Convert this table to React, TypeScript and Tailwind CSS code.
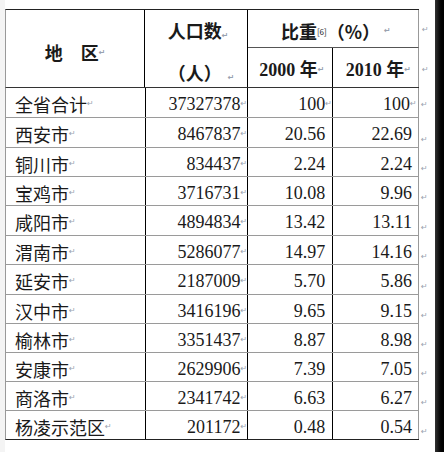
const CJK = "font-['Noto_Sans_CJK_SC',sans-serif]"

type Row = { name: string; pop: string; y2000: string; y2010: string; h: string; marks?: boolean }

const ROWS: Row[] = [
  { name: '全省合计', pop: '37327378', y2000: '100', y2010: '100', h: 'h-[30px]', marks: true },
  { name: '西安市', pop: '8467837', y2000: '20.56', y2010: '22.69', h: 'h-[30px]' },
  { name: '铜川市', pop: '834437', y2000: '2.24', y2010: '2.24', h: 'h-[29px]' },
  { name: '宝鸡市', pop: '3716731', y2000: '10.08', y2010: '9.96', h: 'h-[29px]' },
  { name: '咸阳市', pop: '4894834', y2000: '13.42', y2010: '13.11', h: 'h-[30px]' },
  { name: '渭南市', pop: '5286077', y2000: '14.97', y2010: '14.16', h: 'h-[29px]' },
  { name: '延安市', pop: '2187009', y2000: '5.70', y2010: '5.86', h: 'h-[30px]' },
  { name: '汉中市', pop: '3416196', y2000: '9.65', y2010: '9.15', h: 'h-[29px]' },
  { name: '榆林市', pop: '3351437', y2000: '8.87', y2010: '8.98', h: 'h-[29px]' },
  { name: '安康市', pop: '2629906', y2000: '7.39', y2010: '7.05', h: 'h-[29px]' },
  { name: '商洛市', pop: '2341742', y2000: '6.63', y2010: '6.27', h: 'h-[29px]' },
  { name: '杨凌示范区', pop: '201172', y2000: '0.48', y2010: '0.54', h: 'h-[29px]' },
]

/** Word paragraph mark. */
function Mark({ className }: { className?: string }) {
  return (
    <span
      className={`inline-block w-[7px] font-['DejaVu_Sans',sans-serif] text-[8px] leading-none text-gray-400 ${className ?? ''}`}
    >
      ↵
    </span>
  )
}

function Header() {
  return (
    <div className="flex">
      <div className={`flex h-[79px] w-[414px] border-b border-l border-t border-b-[#333] border-l-[#999] border-t-[#222] font-bold ${CJK}`}>
        <div className="flex w-[140px] items-center justify-center border-r border-black pt-[8px]">
          地　区<Mark />
        </div>
        <div className="flex w-[103px] flex-col items-center justify-between border-r border-black pb-[5px] pt-[11px] leading-none">
          <span className="pl-[4px]">
            人口数<Mark />
          </span>
          <span className="pl-[10px]">
            （人）<Mark className="ml-[6px]" />
          </span>
        </div>
        <div className="flex w-[171px] flex-col">
          <div className="flex h-[38px] items-center justify-center border-b border-r border-b-[#555] border-r-[#999] pt-[4px] leading-none">
            <span className="pl-[6px]">
              比重<sup className="text-[8px] font-normal">[6]</sup>（%）
            </span>
            <Mark className="ml-[4px]" />
          </div>
          <div className="flex flex-1 font-['Liberation_Serif','Noto_Sans_CJK_SC',serif]">
            <div className="flex w-[85px] items-center justify-center border-r border-black pt-[4px]">
              <span className="pl-[4px]">
                2000 <span className={CJK}>年</span>
              </span>
              <Mark />
            </div>
            <div className="flex w-[86px] items-center justify-center border-r border-[#999] pt-[4px]">
              <span className="pl-[6px]">
                2010 <span className={CJK}>年</span>
              </span>
              <Mark />
            </div>
          </div>
        </div>
      </div>
      <div className="flex w-[16px] flex-col pl-[3px]">
        <div className="flex h-[38px] items-center pt-[4px]">
          <Mark />
        </div>
        <div className="flex flex-1 items-center pt-[4px]">
          <Mark />
        </div>
      </div>
    </div>
  )
}

export default function App() {
  return (
    <div className="flex h-[452px] w-[444px] bg-white text-[18px] text-[#1a1a1a] font-['Liberation_Serif','Noto_Sans_CJK_SC',serif]">
      <div className="w-[5px] bg-[#f4f4f4]" />
      <div className="flex-1 pt-[9px]">
        <Header />
        {ROWS.map((r, i) => {
          const last = i === ROWS.length - 1
          return (
            <div key={r.name} className={`flex ${r.h}`}>
              <div
                className={`flex w-[414px] border-b border-l border-l-[#999] leading-none ${last ? 'border-b-[#222]' : 'border-b-[#9a9a9a]'}`}
              >
                <div className={`flex w-[140px] items-center border-r border-black pl-[9px] pt-[3px] ${CJK}`}>
                  {r.name}
                  <Mark />
                </div>
                <div className="flex w-[103px] items-center justify-end border-r border-black pt-[3px]">
                  {r.pop}
                  <Mark />
                </div>
                <div
                  className={`flex w-[85px] items-center justify-end border-r border-black pt-[3px] ${r.marks ? 'pr-0' : 'pr-[7px]'}`}
                >
                  {r.y2000}
                  {r.marks && <Mark />}
                </div>
                <div
                  className={`flex w-[86px] items-center justify-end border-r border-[#999] pt-[3px] ${r.marks ? 'pr-[1px]' : 'pr-[6px]'}`}
                >
                  {r.y2010}
                  {r.marks && <Mark />}
                </div>
              </div>
              <div className={`flex w-[16px] pl-[2px] ${r.marks ? 'items-center pt-[3px]' : 'items-end pb-[4px]'}`}>
                <Mark />
              </div>
            </div>
          )
        })}
      </div>
      <div className="w-[9px] bg-gradient-to-r from-[#333] to-black" />
    </div>
  )
}
